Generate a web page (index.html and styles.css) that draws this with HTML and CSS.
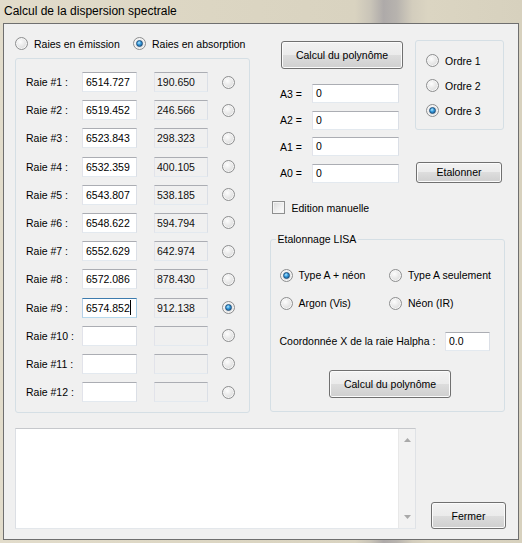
FILE: index.html
```html
<!DOCTYPE html>
<html lang="fr">
<head>
<meta charset="utf-8">
<title>Calcul de la dispersion spectrale</title>
<link rel="stylesheet" href="styles.css">
</head>
<body>
<div class="window">
  <div class="titlebar">Calcul de la dispersion spectrale</div>
  <div class="client">
    <div class="main">
      <div class="left">
        <div class="mode-row">
          <div class="radio first"><span class="dot"></span><span>Raies en émission</span></div>
          <div class="radio"><span class="dot on"></span><span>Raies en absorption</span></div>
        </div>
        <div class="group raies">
          <div class="raie"><span class="rlabel">Raie #1 :</span><div class="tb w1">6514.727</div><div class="tb ro w2">190.650</div><span class="dot"></span></div>
          <div class="raie"><span class="rlabel">Raie #2 :</span><div class="tb w1">6519.452</div><div class="tb ro w2">246.566</div><span class="dot"></span></div>
          <div class="raie"><span class="rlabel">Raie #3 :</span><div class="tb w1">6523.843</div><div class="tb ro w2">298.323</div><span class="dot"></span></div>
          <div class="raie"><span class="rlabel">Raie #4 :</span><div class="tb w1">6532.359</div><div class="tb ro w2">400.105</div><span class="dot"></span></div>
          <div class="raie"><span class="rlabel">Raie #5 :</span><div class="tb w1">6543.807</div><div class="tb ro w2">538.185</div><span class="dot"></span></div>
          <div class="raie"><span class="rlabel">Raie #6 :</span><div class="tb w1">6548.622</div><div class="tb ro w2">594.794</div><span class="dot"></span></div>
          <div class="raie"><span class="rlabel">Raie #7 :</span><div class="tb w1">6552.629</div><div class="tb ro w2">642.974</div><span class="dot"></span></div>
          <div class="raie"><span class="rlabel">Raie #8 :</span><div class="tb w1">6572.086</div><div class="tb ro w2">878.430</div><span class="dot"></span></div>
          <div class="raie"><span class="rlabel">Raie #9 :</span><div class="tb w1 focus">6574.852<span class="caret"></span></div><div class="tb ro w2">912.138</div><span class="dot on"></span></div>
          <div class="raie"><span class="rlabel">Raie #10 :</span><div class="tb w1"></div><div class="tb ro w2"></div><span class="dot"></span></div>
          <div class="raie"><span class="rlabel">Raie #11 :</span><div class="tb w1"></div><div class="tb ro w2"></div><span class="dot"></span></div>
          <div class="raie"><span class="rlabel">Raie #12 :</span><div class="tb w1"></div><div class="tb ro w2"></div><span class="dot"></span></div>
        </div>
      </div>
      <div class="right">
        <div class="right-top">
          <div class="coeffs">
            <div class="btn btn-calc">Calcul du polynôme</div>
            <div class="arow a3"><span class="alabel">A3 =</span><div class="tb wa">0</div></div>
            <div class="arow"><span class="alabel">A2 =</span><div class="tb wa">0</div></div>
            <div class="arow"><span class="alabel">A1 =</span><div class="tb wa">0</div></div>
            <div class="arow"><span class="alabel">A0 =</span><div class="tb wa">0</div></div>
          </div>
          <div class="side">
            <div class="group ordre">
              <div class="radio"><span class="dot"></span><span>Ordre 1</span></div>
              <div class="radio"><span class="dot"></span><span>Ordre 2</span></div>
              <div class="radio"><span class="dot on"></span><span>Ordre 3</span></div>
            </div>
            <div class="btn btn-etal">Etalonner</div>
          </div>
        </div>
        <div class="check-row"><span class="box"></span><span>Edition manuelle</span></div>
        <fieldset class="lisa">
          <legend>Etalonnage LISA</legend>
          <div class="lisa-grid">
            <div class="radio"><span class="dot on"></span><span>Type A + néon</span></div>
            <div class="radio"><span class="dot"></span><span>Type A seulement</span></div>
            <div class="radio"><span class="dot"></span><span>Argon (Vis)</span></div>
            <div class="radio"><span class="dot"></span><span>Néon (IR)</span></div>
          </div>
          <div class="coord-row"><span class="clabel">Coordonnée X de la raie Halpha :</span><div class="tb wc">0.0</div></div>
          <div class="btn btn-calc2">Calcul du polynôme</div>
        </fieldset>
      </div>
    </div>
    <div class="bottom">
      <div class="log">
        <div class="log-text"></div>
        <div class="scrollbar">
          <svg width="7" height="4" viewBox="0 0 7 4"><path d="M0 4 L3.5 0 L7 4 Z" fill="#a9a9a9"/></svg>
          <svg width="7" height="4" viewBox="0 0 7 4"><path d="M0 0 L3.5 4 L7 0 Z" fill="#a9a9a9"/></svg>
        </div>
      </div>
      <div class="btn btn-fermer">Fermer</div>
    </div>
  </div>
</div>
</body>
</html>
```

FILE: styles.css
```css
html, body {
  margin: 0;
  padding: 0;
}
body {
  background: #dbd5c2;
  font-family: "Liberation Sans", Arial, sans-serif;
  font-size: 10.5px;
  color: #000;
}
.window {
  width: 522px;
  height: 543px;
  overflow: hidden;
  background: linear-gradient(to right, #e2dccb 0, #dcd6c3 40%, #d9d3c0 68%, #c9c4b8 71%, #aeaaa9 73.5%, #b7b3ae 76%, #d3cdbd 79%, #dbd5c2 82%, #d7d1be 100%);
}
.titlebar {
  height: 23px;
  padding-left: 4px;
  font-family: "Liberation Sans", Arial, sans-serif;
  font-size: 12px;
  line-height: 22px;
  color: #000;
  white-space: nowrap;
}
.client {
  margin-left: 3px;
  width: 516px;
  height: 517px;
  box-sizing: border-box;
  border: 1px solid #6f6f6f;
  background: #f0f0f0;
  padding-left: 11px;
}
.main {
  display: flex;
  gap: 20px;
}
.left {
  width: 235px;
}
.right {
  width: 235px;
  padding-top: 16px;
  display: flex;
  flex-direction: column;
}

/* radios */
.radio {
  display: flex;
  align-items: center;
  gap: 6px;
  height: 13px;
  white-space: nowrap;
}
.dot {
  flex: none;
  width: 13px;
  height: 13px;
  box-sizing: border-box;
  border-radius: 50%;
  border: 1px solid #8d8e8f;
  background: radial-gradient(circle at 40% 35%, #fdfdfd 0, #ebebeb 40%, #d2d2d2 100%);
  box-shadow: inset 0 0 0 1px #f6f6f6;
  display: flex;
  align-items: center;
  justify-content: center;
}
.dot.on::after {
  content: "";
  width: 7px;
  height: 7px;
  box-sizing: border-box;
  border-radius: 50%;
  border: 1px solid #1d4f7c;
  background: radial-gradient(circle at 40% 35%, #b8ecff 0, #3a9ee0 40%, #0e4f86 100%);
}

.mode-row {
  display: flex;
  height: 13px;
  margin-top: 13px;
}
.mode-row .first {
  width: 118px;
}

/* group boxes */
.group {
  box-sizing: border-box;
  border: 1px solid #d5dfe5;
  border-radius: 3px;
}
.raies {
  margin-top: 8px;
  height: 355px;
  padding: 13px 0 0 10px;
  display: flex;
  flex-direction: column;
  gap: 8.2px;
}
.raie {
  display: flex;
  align-items: center;
  height: 20px;
}
.rlabel {
  width: 56px;
  white-space: nowrap;
}
.raie .dot {
  margin-left: 13.5px;
}

/* text boxes */
.tb {
  box-sizing: border-box;
  border: 1px solid;
  border-color: #abadb3 #dbdfe6 #e3e9ef #e2e3ea;
  background: #fff;
  padding: 0 3px;
  white-space: nowrap;
  overflow: hidden;
}
.tb.ro {
  background: #f0f0f0;
  padding: 0 2px;
  color: #101010;
}
.tb.focus {
  border-color: #3d7bad #a4c9e3 #b7d9ed #b5cfe7;
}
.caret {
  display: inline-block;
  width: 1px;
  height: 15px;
  background: #000;
  vertical-align: middle;
  margin-top: -2px;
}
.w1 {
  width: 55px;
  height: 20px;
  line-height: 18px;
}
.w2 {
  width: 54px;
  height: 20px;
  line-height: 18px;
  margin-left: 17px;
}
.wa {
  width: 87px;
  height: 19px;
  line-height: 17px;
}
.wc {
  width: 45px;
  height: 19px;
  line-height: 17px;
}

/* buttons */
.btn {
  box-sizing: border-box;
  border: 1px solid #707070;
  border-radius: 3px;
  background: linear-gradient(#f2f2f2 0, #ebebeb 50%, #dddddd 50%, #cfcfcf 100%);
  box-shadow: inset 0 0 0 1px #fbfbfb;
  display: flex;
  align-items: center;
  justify-content: center;
  white-space: nowrap;
}
.btn-calc {
  margin: 1px 0 0 11px;
  width: 122px;
  height: 28px;
}
.btn-etal {
  margin-left: 1px;
  width: 86px;
  height: 21px;
}
.btn-calc2 {
  margin: 19px 0 0 49.5px;
  width: 122px;
  height: 28px;
}
.btn-fermer {
  width: 75px;
  height: 27px;
}

/* coefficients */
.right-top {
  display: flex;
}
.coeffs {
  width: 145px;
}
.arow {
  display: flex;
  align-items: center;
  height: 19px;
  margin-top: 7.5px;
}
.arow.a3 {
  margin-top: 15px;
}
.alabel {
  margin-left: 10px;
  width: 32px;
}
.side {
  width: 89px;
  display: flex;
  flex-direction: column;
  justify-content: space-between;
}
.ordre {
  height: 90px;
  padding: 13px 0 0 10px;
  display: flex;
  flex-direction: column;
  gap: 12px;
}

/* checkbox */
.check-row {
  display: flex;
  align-items: center;
  gap: 6.5px;
  height: 13px;
  margin: 18.5px 0 0 2px;
}
.box {
  width: 13px;
  height: 13px;
  box-sizing: border-box;
  border: 1px solid #8e8f8f;
  background: linear-gradient(135deg, #d8d8d8 0, #f0f0f0 55%, #fdfdfd 100%);
  box-shadow: inset 0 0 0 1px #f4f4f4;
}

/* LISA */
.lisa {
  margin: 18.5px 0 0;
  padding: 23px 13px 13px 8.5px;
  border: 1px solid #d5dfe5;
  border-radius: 3px;
  min-width: 0;
}
.lisa legend {
  margin-left: -4px;
  padding: 0 2px;
  line-height: 13px;
}
.lisa-grid {
  display: grid;
  grid-template-columns: 109.5px auto;
  grid-auto-rows: 13px;
  row-gap: 15.3px;
}
.coord-row {
  display: flex;
  align-items: center;
  height: 19px;
  margin-top: 22.2px;
}
.clabel {
  width: 165.5px;
  white-space: nowrap;
}

/* bottom */
.bottom {
  display: flex;
  align-items: flex-end;
  gap: 15px;
  margin-top: 15px;
}
.log {
  width: 401px;
  height: 101px;
  box-sizing: border-box;
  border: 1px solid;
  border-color: #c6c8cc #dfe2e6 #e3e7eb #dcdfe4;
  background: #fff;
  display: flex;
}
.log-text {
  flex: 1;
}
.scrollbar {
  width: 17px;
  background: #f2f2f2;
  border-left: 1px solid #e8e8e8;
  box-sizing: border-box;
  display: flex;
  flex-direction: column;
  align-items: center;
  justify-content: space-between;
  padding: 9px 0 9px;
}
```
